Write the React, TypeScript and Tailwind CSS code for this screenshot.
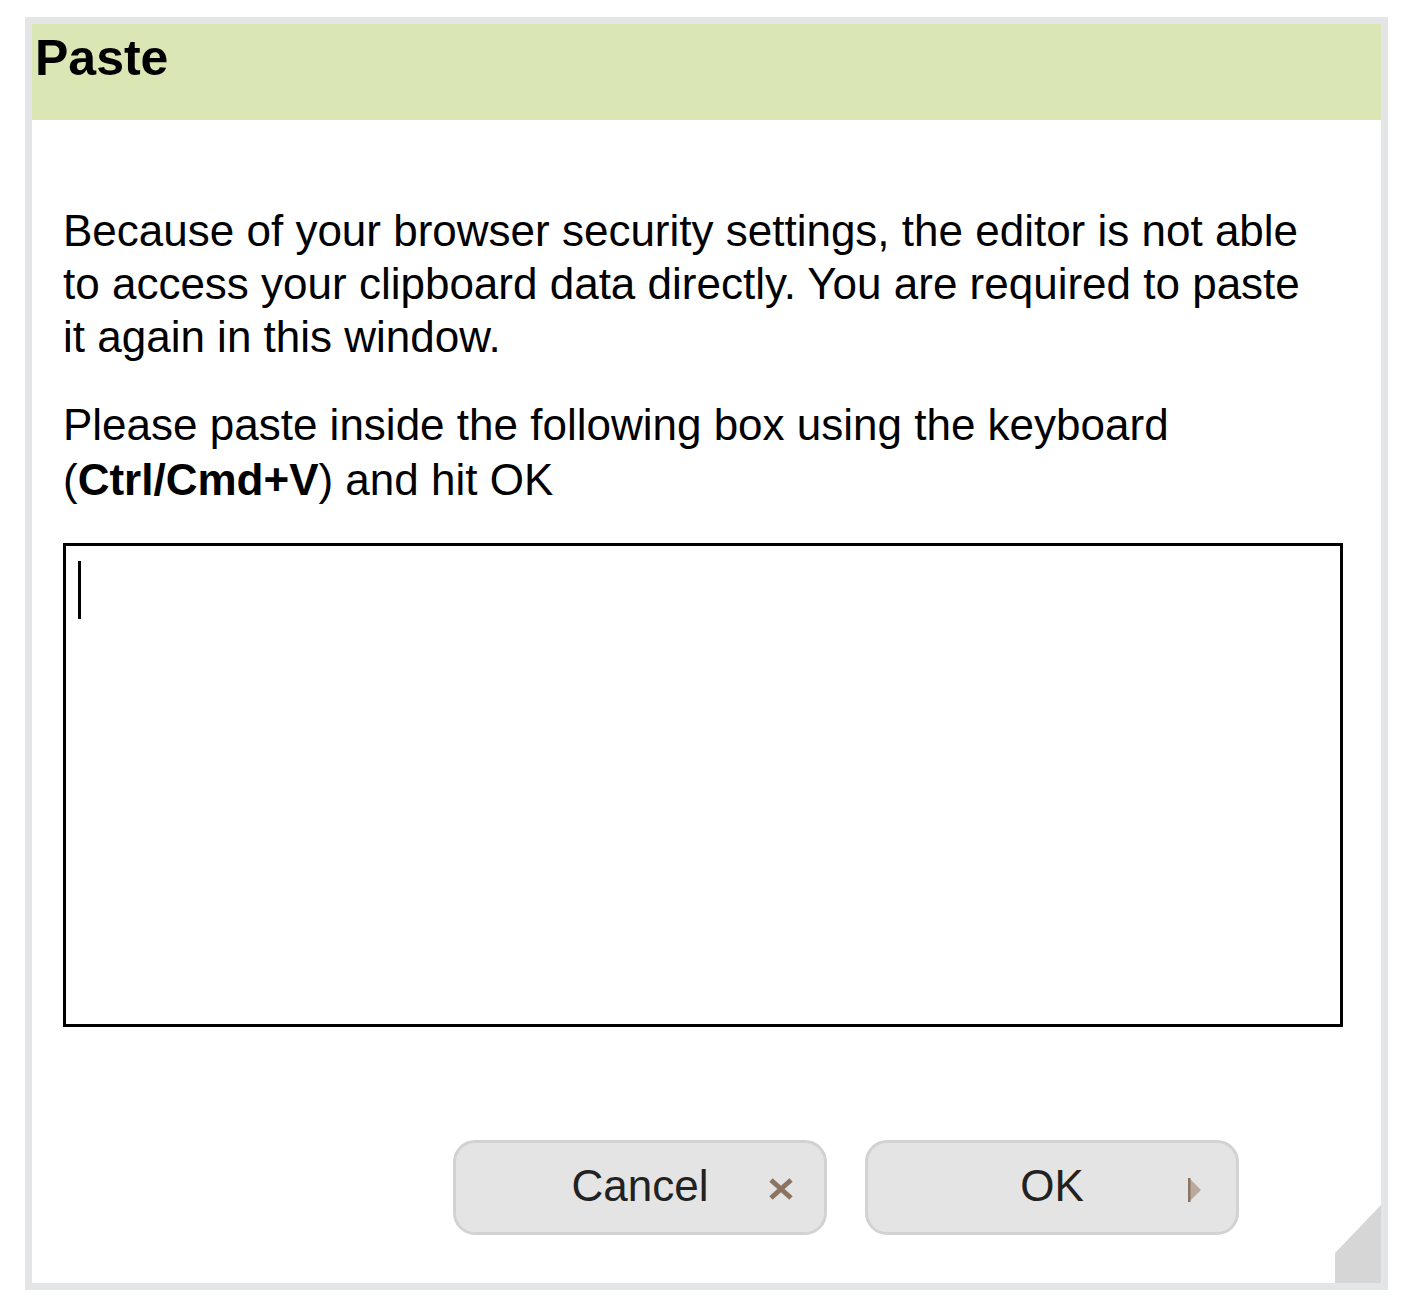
import React from "react";

const font = { fontFamily: '"Liberation Sans", Arial, sans-serif' };

const DialogButton = ({ label, icon }: { label: string; icon: React.ReactNode }) => (
  <button className="relative w-[374px] h-[95px] rounded-[22px] border-[3px] border-[#d2d2d2] bg-[#e4e4e4] text-[44px] text-[#222] flex items-center justify-center">
    <span className="-mt-[4px]">{label}</span>
    <span className="absolute right-[30px] top-[34px]">{icon}</span>
  </button>
);

const App = () => {
  return (
    <div className="w-[1418px] h-[1304px] bg-white pt-[17px] pl-[25px]" style={font}>
      <div className="relative w-[1363px] h-[1273px] border-[7px] border-[#e4e5e7] bg-white flex flex-col">
        {/* header */}
        <div className="h-[96px] bg-[#dae6b3] pl-[3px] pt-[4px]">
          <h1 className="text-[50px] font-bold leading-[60px] text-black">Paste</h1>
        </div>

        {/* body */}
        <div className="px-[31px] pt-[84px] text-[44px] leading-[53px] text-black">
          <p className="w-[1250px]">
            Because of your browser security settings, the editor is not able to access your clipboard data
            directly. You are required to paste it again in this window.
          </p>
          <p className="mt-[34px] leading-[55px]">
            Please paste inside the following box using the keyboard
            <br />
            (<b>Ctrl/Cmd+V</b>) and hit OK
          </p>
          <div className="mt-[36px] w-[1280px] h-[484px] border-[3px] border-black bg-white pl-[12px] pt-[15px]">
            <div className="w-[3px] h-[58px] bg-black" />
          </div>
        </div>

        {/* buttons */}
        <div className="mt-auto mb-[48px] flex justify-end gap-[38px] pr-[142px]">
          <DialogButton
            label="Cancel"
            icon={
              <svg width="26" height="24" viewBox="0 0 26 24">
                <path d="M3 3 L23 21 M23 3 L3 21" stroke="#8c7461" strokeWidth="5" />
              </svg>
            }
          />
          <DialogButton
            label="OK"
            icon={
              <svg width="14" height="26" viewBox="0 0 14 26" className="mr-[4px]">
                <path d="M1 1 L13 13 L1 25 Z" fill="#b9aa9d" />
                <path d="M1 1 L1 25" stroke="#8c7461" strokeWidth="3" />
              </svg>
            }
          />
        </div>

        {/* resize grip */}
        <svg className="absolute right-0 bottom-0" width="48" height="78" viewBox="0 0 48 78">
          <path d="M48 0 L48 78 L2 78 L2 48 Z" fill="#d6d6d6" />
        </svg>
      </div>
    </div>
  );
};

export default App;
